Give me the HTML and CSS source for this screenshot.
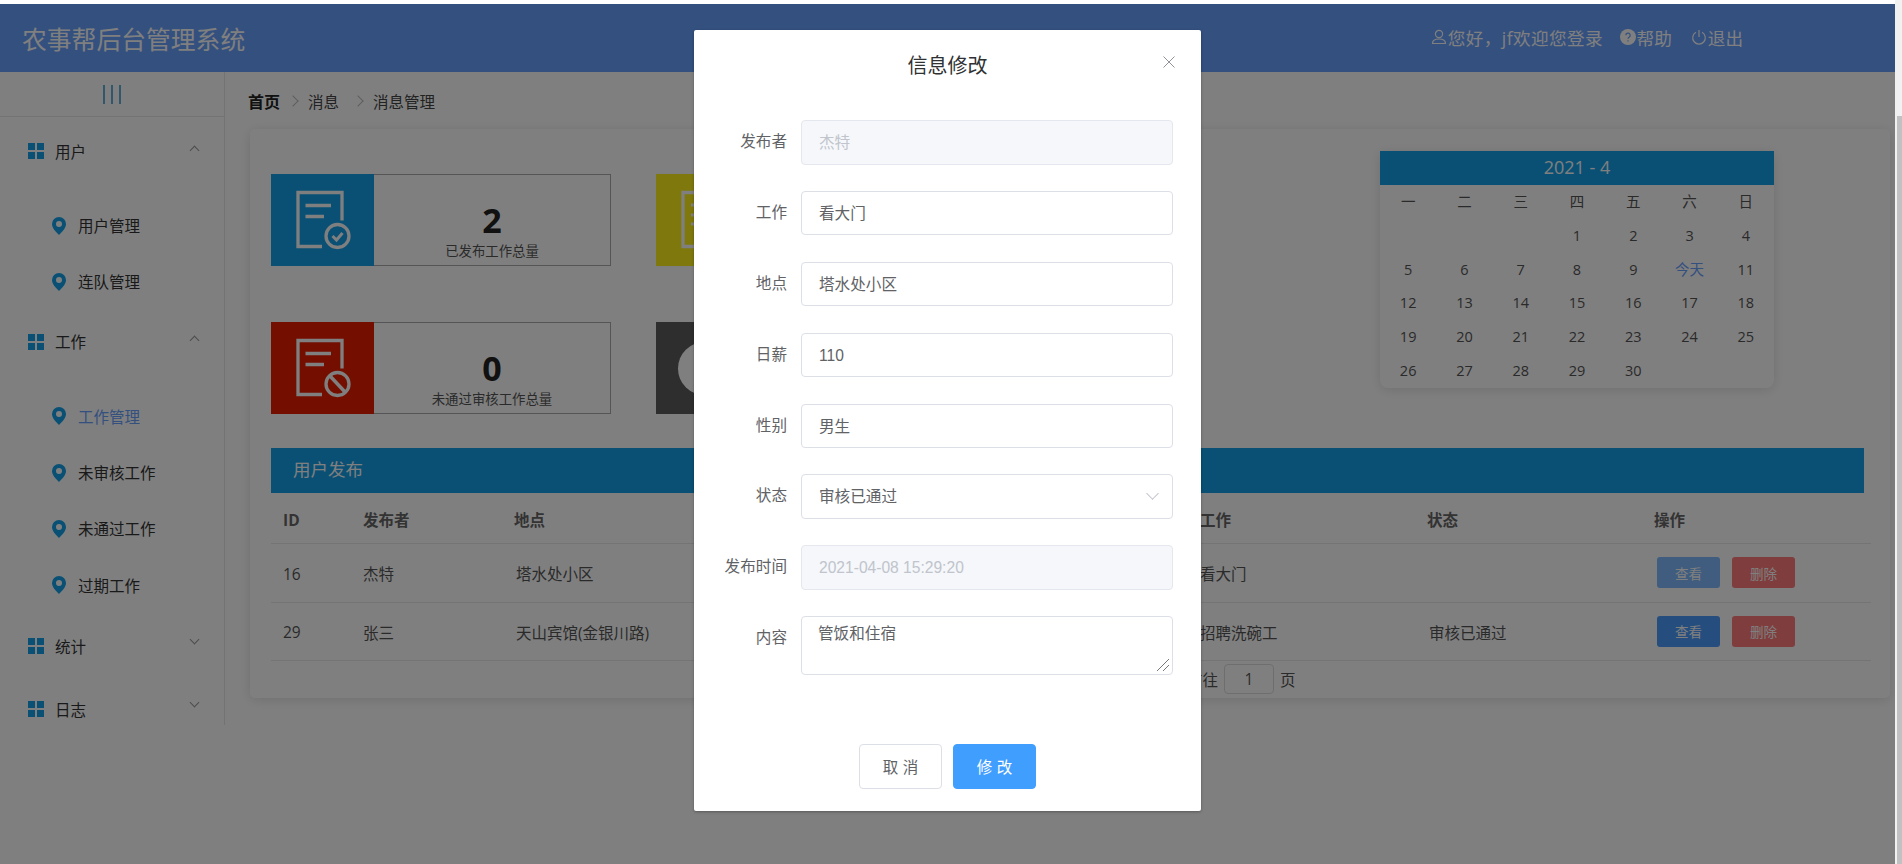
FILE: index.html
```html
<!DOCTYPE html>
<html lang="zh-CN">
<head>
    <meta charset="UTF-8">
    <title>农事帮后台管理系统</title>
    <link rel="stylesheet" href="styles.css">
</head>
<body>
<svg class="icon-defs" width="0" height="0">
    <symbol id="grid" viewBox="0 0 16 16">
        <rect x="0" y="0" width="7" height="7"/><rect x="9" y="0" width="7" height="7"/>
        <rect x="0" y="9" width="7" height="7"/><rect x="9" y="9" width="7" height="7"/>
    </symbol>
    <symbol id="pin" viewBox="0 0 14 18">
        <path fill-rule="evenodd" d="M7 0a7 7 0 0 1 7 7c0 4-4 8-7 11C4 15 0 11 0 7a7 7 0 0 1 7-7zm0 4a3 3 0 1 0 0 6 3 3 0 0 0 0-6z"/>
    </symbol>
    <symbol id="doc" viewBox="0 0 56 60">
        <path d="M27 56.500H3V2.500h44v28" fill="none" stroke="currentColor" stroke-width="3.300"/>
    </symbol>
</svg>

<div class="page">
    <div class="stage">
        <header class="topbar">
            <div class="brand">农事帮后台管理系统</div>
            <div class="top-links">
                <span class="top-link welcome">
                    <svg class="top-icon" viewBox="0 0 16 16"><circle cx="8" cy="5" r="3.600"/><path d="M1.500 14.500c0-3 2-4.500 6.500-4.500s6.500 1.500 6.500 4.500z"/></svg>您好，jf欢迎您登录
                </span>
                <span class="top-link">
                    <svg class="top-icon help" viewBox="0 0 16 16"><circle cx="8" cy="8" r="8"/><path d="M5.800 6.200a2.200 2.200 0 1 1 3.200 2c-.7.4-1 .8-1 1.500M8 11.200v1.300"/></svg>帮助
                </span>
                <span class="top-link">
                    <svg class="top-icon" viewBox="0 0 16 16"><path d="M5 3.200a6.300 6.300 0 1 0 6 0M8 1v7"/></svg>退出
                </span>
            </div>
        </header>

        <div class="body-row">
            <aside class="sidebar">
                <div class="collapse-btn"><i></i><i></i><i></i></div>
                <div class="menu-title"><svg class="grid-icon"><use href="#grid"/></svg>用户<span class="arrow up"></span></div>
                <div class="menu-item"><svg class="pin-icon"><use href="#pin"/></svg>用户管理</div>
                <div class="menu-item"><svg class="pin-icon"><use href="#pin"/></svg>连队管理</div>
                <div class="menu-title"><svg class="grid-icon"><use href="#grid"/></svg>工作<span class="arrow up"></span></div>
                <div class="menu-item active"><svg class="pin-icon"><use href="#pin"/></svg>工作管理</div>
                <div class="menu-item"><svg class="pin-icon"><use href="#pin"/></svg>未审核工作</div>
                <div class="menu-item"><svg class="pin-icon"><use href="#pin"/></svg>未通过工作</div>
                <div class="menu-item"><svg class="pin-icon"><use href="#pin"/></svg>过期工作</div>
                <div class="menu-title closed"><svg class="grid-icon"><use href="#grid"/></svg>统计<span class="arrow"></span></div>
                <div class="menu-title closed"><svg class="grid-icon"><use href="#grid"/></svg>日志<span class="arrow"></span></div>
            </aside>

            <main class="content">
                <div class="breadcrumb">
                    <b>首页</b><span class="crumb-sep"></span><span>消息</span><span class="crumb-sep"></span><span>消息管理</span>
                </div>

                <section class="panel">
                    <div class="overview">
                        <div class="stat-grid">
                            <div class="stat">
                                <div class="stat-icon blue">
                                    <svg class="doc-icon" viewBox="0 0 56 60"><use href="#doc"/><path d="M10.500 15.500H36M10.500 26.500H29" fill="none" stroke="currentColor" stroke-width="3.300"/><circle cx="42.500" cy="46" r="11.500" fill="none" stroke="currentColor" stroke-width="3.300"/><path d="M37.500 46l4 4 6-7" fill="none" stroke="currentColor" stroke-width="3"/></svg>
                                </div>
                                <div class="stat-text"><strong>2</strong><span>已发布工作总量</span></div>
                            </div>
                            <div class="stat">
                                <div class="stat-icon yellow">
                                    <svg class="doc-icon" viewBox="0 0 56 60"><use href="#doc"/><path d="M11 15h25M11 25h25M11 34h25" fill="none" stroke="currentColor" stroke-width="3"/></svg>
                                </div>
                            </div>
                            <div class="stat">
                                <div class="stat-icon red">
                                    <svg class="doc-icon" viewBox="0 0 56 60"><use href="#doc"/><path d="M10.500 15.500H36M10.500 26.500H29" fill="none" stroke="currentColor" stroke-width="3.300"/><circle cx="42.500" cy="46" r="11.500" fill="none" stroke="currentColor" stroke-width="3.300"/><path d="M35 38l15 16" fill="none" stroke="currentColor" stroke-width="3.500"/></svg>
                                </div>
                                <div class="stat-text"><strong>0</strong><span>未通过审核工作总量</span></div>
                            </div>
                            <div class="stat">
                                <div class="stat-icon dark"><span class="dark-disc"></span></div>
                            </div>
                        </div>

                        <div class="calendar">
                            <div class="cal-head">2021 - 4</div>
                            <div class="cal-grid">
                                <span>一</span><span>二</span><span>三</span><span>四</span><span>五</span><span>六</span><span>日</span>
                                <span></span><span></span><span></span><span>1</span><span>2</span><span>3</span><span>4</span>
                                <span>5</span><span>6</span><span>7</span><span>8</span><span>9</span><span class="today">今天</span><span>11</span>
                                <span>12</span><span>13</span><span>14</span><span>15</span><span>16</span><span>17</span><span>18</span>
                                <span>19</span><span>20</span><span>21</span><span>22</span><span>23</span><span>24</span><span>25</span>
                                <span>26</span><span>27</span><span>28</span><span>29</span><span>30</span><span></span><span></span>
                            </div>
                        </div>
                    </div>

                    <div class="section-bar">用户发布</div>
                    <div class="table-row table-head">
                        <span>ID</span><span>发布者</span><span>地点</span><span>工作</span><span>状态</span><span>操作</span>
                    </div>
                    <div class="table-row">
                        <span>16</span><span>杰特</span><span class="indent">塔水处小区</span><span>看大门</span><span></span>
                        <span class="actions"><button class="btn-small view faded">查看</button><button class="btn-small del">删除</button></span>
                    </div>
                    <div class="table-row">
                        <span>29</span><span>张三</span><span class="indent">天山宾馆(金银川路)</span><span>招聘洗碗工</span><span class="indent">审核已通过</span>
                        <span class="actions"><button class="btn-small view">查看</button><button class="btn-small del">删除</button></span>
                    </div>
                    <div class="pager">前往<span class="pager-input">1</span>页</div>
                </section>
            </main>
        </div>

        <div class="mask"></div>

        <div class="dialog">
            <h2 class="dialog-title">信息修改</h2>
            <svg class="dialog-close" viewBox="0 0 12 12"><path d="M.5.500l11 11M11.500.500l-11 11"/></svg>
            <form class="edit-form">
                <label class="form-row"><span class="form-label">发布者</span><span class="field disabled">杰特</span></label>
                <label class="form-row"><span class="form-label">工作</span><span class="field">看大门</span></label>
                <label class="form-row"><span class="form-label">地点</span><span class="field">塔水处小区</span></label>
                <label class="form-row"><span class="form-label">日薪</span><span class="field">110</span></label>
                <label class="form-row"><span class="form-label">性别</span><span class="field">男生</span></label>
                <label class="form-row"><span class="form-label">状态</span><span class="field select">审核已通过<span class="select-arrow"></span></span></label>
                <label class="form-row"><span class="form-label">发布时间</span><span class="field disabled">2021-04-08 15:29:20</span></label>
                <label class="form-row"><span class="form-label">内容</span><span class="field area">管饭和住宿<svg class="resize-grip" viewBox="0 0 12 12"><path d="M0 12L12 0M6 12l6-6"/></svg></span></label>
            </form>
            <div class="dialog-footer">
                <button type="button" class="btn">取 消</button>
                <button type="button" class="btn primary">修 改</button>
            </div>
        </div>
    </div>

    <div class="scrollbar"><div class="scroll-thumb"></div></div>
</div>
</body>
</html>
```

FILE: styles.css
```css
* {
    margin: 0;
    padding: 0;
    box-sizing: border-box;
}

html, body {
    height: 100%;
    overflow: hidden;
}

body {
    font-family: "Open Sans", "Noto Sans CJK SC", sans-serif;
    font-size: 15.5px;
    color: #555;
    background: #fff;
}

.icon-defs {
    position: absolute;
}

.page {
    display: flex;
    height: 864px;
    padding-top: 4px;
}

.stage {
    position: relative;
    flex: 1;
    overflow: hidden;
}

.scrollbar {
    width: 7px;
    margin-top: -4px;
    padding: 116px 0 0 2px;
    background: #f1f1f1;
}

.scroll-thumb {
    height: 100%;
    background: #c1c1c1;
}

/* top bar */
.topbar {
    display: flex;
    justify-content: space-between;
    align-items: center;
    height: 68px;
    padding: 0 152px 0 22px;
    background: #68a0ff;
    color: #fff;
}

.brand {
    font-size: 24.8px;
}

.top-links {
    display: flex;
    gap: 19px;
    margin-bottom: 2px;
}

.top-link {
    display: flex;
    align-items: center;
    font-size: 17.6px;
}

.welcome {
    margin-right: -2.400px;
    letter-spacing: 0.4px;
}

.top-icon {
    width: 16px;
    height: 16px;
    margin-right: 1px;
    fill: none;
    stroke: #fff;
    stroke-width: 1.200;
}

.top-icon.help circle {
    fill: #fff;
    stroke: none;
}

.top-icon.help path {
    stroke: #68a0ff;
}

/* sidebar */
.body-row {
    display: flex;
}

.sidebar {
    width: 225px;
    height: 653px;
    border-right: 1px solid #e6e6e6;
    color: #333;
}

.collapse-btn {
    display: flex;
    justify-content: center;
    gap: 6px;
    height: 45px;
    margin-bottom: 3px;
    padding-top: 13px;
    border-bottom: 1px solid #e6e6e6;
}

.collapse-btn i {
    width: 2px;
    height: 19px;
    background: #5fb0dd;
}

.menu-title {
    display: flex;
    align-items: center;
    height: 64px;
    padding: 0 0 2px 28px;
}

.menu-title.closed {
    height: 63px;
}

.menu-item + .menu-title.closed {
    margin-top: 1.500px;
}

.grid-icon {
    width: 16px;
    height: 16px;
    margin-right: 11px;
    fill: #14a0ea;
}

.arrow {
    width: 7px;
    height: 7px;
    margin-left: auto;
    margin-right: 26px;
    border-right: 1px solid #999;
    border-bottom: 1px solid #999;
    transform: translateY(-7px) rotate(45deg);
}

.arrow.up {
    transform: translateY(-1px) rotate(225deg);
}

.menu-item {
    display: flex;
    align-items: center;
    height: 56.200px;
    padding: 0 0 2px 52px;
}

.menu-title + .menu-item {
    margin-top: 14.500px;
}

.menu-item.active {
    color: #68a0ff;
}

.pin-icon {
    width: 14px;
    height: 18px;
    margin-right: 12px;
    fill: #14a0ea;
}

/* main content */
.content {
    flex: 1;
    padding-left: 23px;
    min-width: 0;
}

.breadcrumb {
    display: flex;
    align-items: center;
    height: 57px;
    padding-top: 1px;
    color: #444;
}

.breadcrumb b {
    font-size: 16px;
    color: #222;
}

.crumb-sep {
    width: 8px;
    height: 8px;
    margin: 0 11px 0 15px;
    border-top: 1px solid #bbb;
    border-right: 1px solid #bbb;
    transform: rotate(45deg);
}

.breadcrumb b + .crumb-sep {
    margin: 0 11px 0 9px;
}

.panel {
    height: 569px;
    margin: 0 5px 0 2px;
    padding: 45px 26px 0 21px;
    background: #fff;
    border-radius: 5px;
    box-shadow: 0 2px 12px rgba(0, 0, 0, 0.12);
}

.overview {
    display: flex;
    height: 274px;
}

.stat-grid {
    display: grid;
    grid-template-columns: 340px 340px;
    grid-auto-rows: 92px;
    column-gap: 45px;
    row-gap: 56px;
    align-content: start;
}

.stat {
    display: flex;
    border: 1px solid #aaa;
}

.stat-icon {
    display: flex;
    align-items: center;
    justify-content: center;
    width: 103px;
    margin: -1px 0 -1px -1px;
    color: #fff;
    overflow: hidden;
}

.blue { background: #14a0ea; }
.yellow { background: #fff01a; }
.red { background: #e81e00; }
.dark {
    justify-content: flex-start;
    background: #5c5c5c;
}

.doc-icon {
    width: 56px;
    height: 60px;
    overflow: visible;
}

.dark-disc {
    flex: none;
    width: 53px;
    height: 53px;
    margin-left: 22px;
    border-radius: 50%;
    background: #fff;
}

.stat-text {
    flex: 1;
    display: flex;
    flex-direction: column;
    align-items: center;
    padding-top: 23px;
}

.stat-text strong {
    font-size: 34px;
    line-height: 44px;
    color: #222;
}

.stat-text span {
    font-size: 13.400px;
    line-height: 18px;
}

.calendar {
    width: 394px;
    height: 237px;
    margin: -23px 0 0 384px;
    border-radius: 0 0 8px 8px;
    box-shadow: 0 2px 12px rgba(0, 0, 0, 0.12);
}

.cal-head {
    height: 34px;
    background: #14a0ea;
    color: #fff;
    font-size: 18px;
    line-height: 32px;
    text-align: center;
}

.cal-grid {
    display: grid;
    grid-template-columns: repeat(7, 1fr);
    grid-auto-rows: 33.800px;
    text-align: center;
    font-size: 14.500px;
    line-height: 34px;
}

.today {
    color: #68a0ff;
}

.section-bar {
    height: 45px;
    padding-left: 22px;
    background: #14a0ea;
    color: #fff;
    font-size: 17.500px;
    line-height: 43px;
}

.table-row {
    display: grid;
    grid-template-columns: 80px 151px 686px 227px 227px 1fr;
    align-items: center;
    height: 58.500px;
    margin-right: -7px;
    padding-left: 12px;
    border-bottom: 1px solid #e8e8e8;
}

.table-row > span {
    padding-top: 2px;
}

.table-row > .actions {
    padding: 0 0 0 3px;
}

.table-head {
    height: 51px;
    padding-top: 1px;
    font-weight: 700;
    color: #666;
}

.indent {
    padding-left: 2px;
}

.actions {
    display: flex;
    gap: 12px;
}

.btn-small {
    width: 63px;
    height: 31px;
    border: none;
    border-radius: 3px;
    color: #fff;
    font: 13.500px "Open Sans", "Noto Sans CJK SC", sans-serif;
}

.view { background: #4a9cff; }
.view.faded { background: #80baff; }
.del { background: #ff7a7a; }

.pager {
    display: flex;
    align-items: center;
    height: 36px;
    padding-left: 916px;
}

.pager-input {
    width: 50px;
    height: 30px;
    margin: 0 6px;
    border: 1px solid #ddd;
    border-radius: 4px;
    text-align: center;
    line-height: 28px;
}

/* dialog */
.mask {
    position: absolute;
    inset: 0;
    background: rgba(0, 0, 0, 0.5);
}

.dialog {
    position: absolute;
    left: 694px;
    top: 26px;
    width: 507px;
    height: 781px;
    padding-right: 28px;
    background: #fff;
    border-radius: 2px;
    box-shadow: 0 1px 3px rgba(0, 0, 0, 0.3);
    font-family: "Liberation Sans", "Noto Sans CJK SC", sans-serif;
    font-size: 15.600px;
    color: #606266;
}

.dialog-title {
    height: 90px;
    padding: 22px 0 0 28px;
    font-size: 20px;
    font-weight: 400;
    line-height: 28px;
    text-align: center;
    color: #303133;
}

.dialog-close {
    position: absolute;
    top: 26px;
    right: 26px;
    width: 12px;
    height: 12px;
    fill: none;
    stroke: #909399;
}

.edit-form {
    display: flex;
    flex-direction: column;
    gap: 26.400px;
}

.form-row {
    display: flex;
    align-items: flex-start;
}

.form-label {
    width: 93px;
    text-align: right;
    line-height: 44.500px;
}

.field {
    display: block;
    width: 372px;
    height: 44.500px;
    margin-left: 14px;
    padding-left: 17px;
    border: 1px solid #dcdfe6;
    border-radius: 4px;
    line-height: 43.500px;
}

.field.disabled {
    background: #f5f7fa;
    border-color: #e4e7ed;
    color: #c0c4cc;
}

.select,
.area {
    position: relative;
}

.select-arrow {
    position: absolute;
    top: 14px;
    right: 15px;
    width: 9px;
    height: 9px;
    border-right: 1px solid #c0c4cc;
    border-bottom: 1px solid #c0c4cc;
    transform: rotate(45deg);
}

.field.area {
    height: 59px;
    line-height: 33px;
    padding: 0 0 0 16px;
}

.resize-grip {
    position: absolute;
    right: 3px;
    bottom: 3px;
    width: 12px;
    height: 12px;
    fill: none;
    stroke: #555;
    stroke-width: 0.800;
}

.dialog-footer {
    display: flex;
    justify-content: center;
    gap: 11px;
    margin: 68.600px -28px 0 0;
}

.btn {
    width: 83px;
    height: 45px;
    border: 1px solid #dcdfe6;
    border-radius: 4px;
    background: #fff;
    color: #606266;
    font: 15.500px "Liberation Sans", "Noto Sans CJK SC", sans-serif;
}

.btn.primary {
    border-color: #409eff;
    background: #409eff;
    color: #fff;
}
```
